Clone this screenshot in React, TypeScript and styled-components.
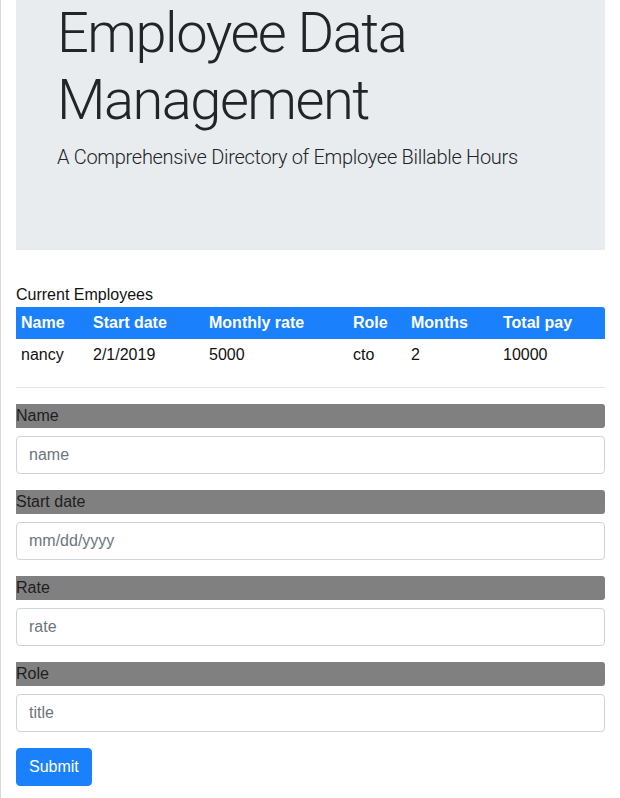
import React from "react";
import styled, { createGlobalStyle } from "styled-components";

const GlobalStyle = createGlobalStyle`
  html, body { margin: 0; padding: 0; background: #fff; }
  body {
    font-family: "Liberation Sans", Arial, sans-serif;
    font-size: 16px;
    line-height: 1.5;
    color: #212529;
    border-left: 1px solid #d9d9d9;
    min-height: 798px;
    box-sizing: border-box;
  }
  * { box-sizing: border-box; }
`;

const Page = styled.div`
  padding: 0 15px;
`;

const Jumbotron = styled.header`
  background: #e9ecef;
  padding: 0 41px 62px;
  margin-bottom: 33px;
`;

const Title = styled.h1`
  margin: 0 0 8px;
  font-family: Roboto, "Liberation Sans", sans-serif;
  font-weight: 300;
  font-size: 56px;
  line-height: 67px;
  letter-spacing: -1.5px;
  color: #212529;
`;

const Lead = styled.p`
  margin: 0 0 16px;
  font-family: Roboto, "Liberation Sans", sans-serif;
  font-weight: 300;
  font-size: 20px;
  line-height: 30px;
  letter-spacing: -0.3px;
  color: #212529;
`;

const Caption = styled.div`
  line-height: 24px;
  color: #111;
`;

const Table = styled.table`
  width: 100%;
  border-collapse: collapse;
  margin-bottom: 16px;
`;

const HeadRow = styled.tr`
  background: #1a80fb;
  color: #fff;
`;

const Th = styled.th`
  text-align: left;
  font-weight: 700;
  padding: 4px 5px;
  line-height: 24px;
  &:last-child { border-top-right-radius: 3px; }
`;

const Td = styled.td`
  padding: 4px 5px;
  line-height: 24px;
  color: #111;
`;

const Rule = styled.hr`
  border: 0;
  border-top: 1px solid #e5e5e5;
  margin: 0 0 16px;
`;

const Group = styled.div`
  margin-bottom: 16px;
`;

const Label = styled.label`
  display: block;
  background: #808080;
  color: #1e1e1e;
  line-height: 24px;
  margin-bottom: 8px;
  border-radius: 0 3px 3px 0;
`;

const Input = styled.input`
  display: block;
  width: 100%;
  height: 38px;
  padding: 6px 12px;
  font-family: "Liberation Sans", Arial, sans-serif;
  font-size: 16px;
  color: #495057;
  background: #fff;
  border: 1px solid #ced4da;
  border-radius: 4px;
  outline: none;
  &::placeholder { color: #6c757d; opacity: 1; }
`;

const Button = styled.button`
  height: 38px;
  padding: 6px 12px;
  font-family: "Liberation Sans", Arial, sans-serif;
  font-size: 16px;
  color: #fff;
  background: #1a80fb;
  border: 1px solid #1a80fb;
  border-radius: 4px;
`;

const columns = ["Name", "Start date", "Monthly rate", "Role", "Months", "Total pay"];
const widths = [72, 116, 144, 58, 92, undefined];
const rows = [["nancy", "2/1/2019", "5000", "cto", "2", "10000"]];

const fields = [
  { label: "Name", placeholder: "name" },
  { label: "Start date", placeholder: "mm/dd/yyyy" },
  { label: "Rate", placeholder: "rate" },
  { label: "Role", placeholder: "title" },
];

export default function App() {
  return (
    <Page>
      <GlobalStyle />
      <Jumbotron>
        <Title>Employee Data Management</Title>
        <Lead>A Comprehensive Directory of Employee Billable Hours</Lead>
      </Jumbotron>
      <Caption>Current Employees</Caption>
      <Table>
        <thead>
          <HeadRow>
            {columns.map((c, i) => (
              <Th key={c} style={widths[i] ? { width: widths[i] } : undefined}>{c}</Th>
            ))}
          </HeadRow>
        </thead>
        <tbody>
          {rows.map((r, i) => (
            <tr key={i}>
              {r.map((v, j) => (
                <Td key={j}>{v}</Td>
              ))}
            </tr>
          ))}
        </tbody>
      </Table>
      <Rule />
      <form onSubmit={(e) => e.preventDefault()}>
        {fields.map((f) => (
          <Group key={f.label}>
            <Label>{f.label}</Label>
            <Input placeholder={f.placeholder} />
          </Group>
        ))}
        <Button type="submit">Submit</Button>
      </form>
    </Page>
  );
}
